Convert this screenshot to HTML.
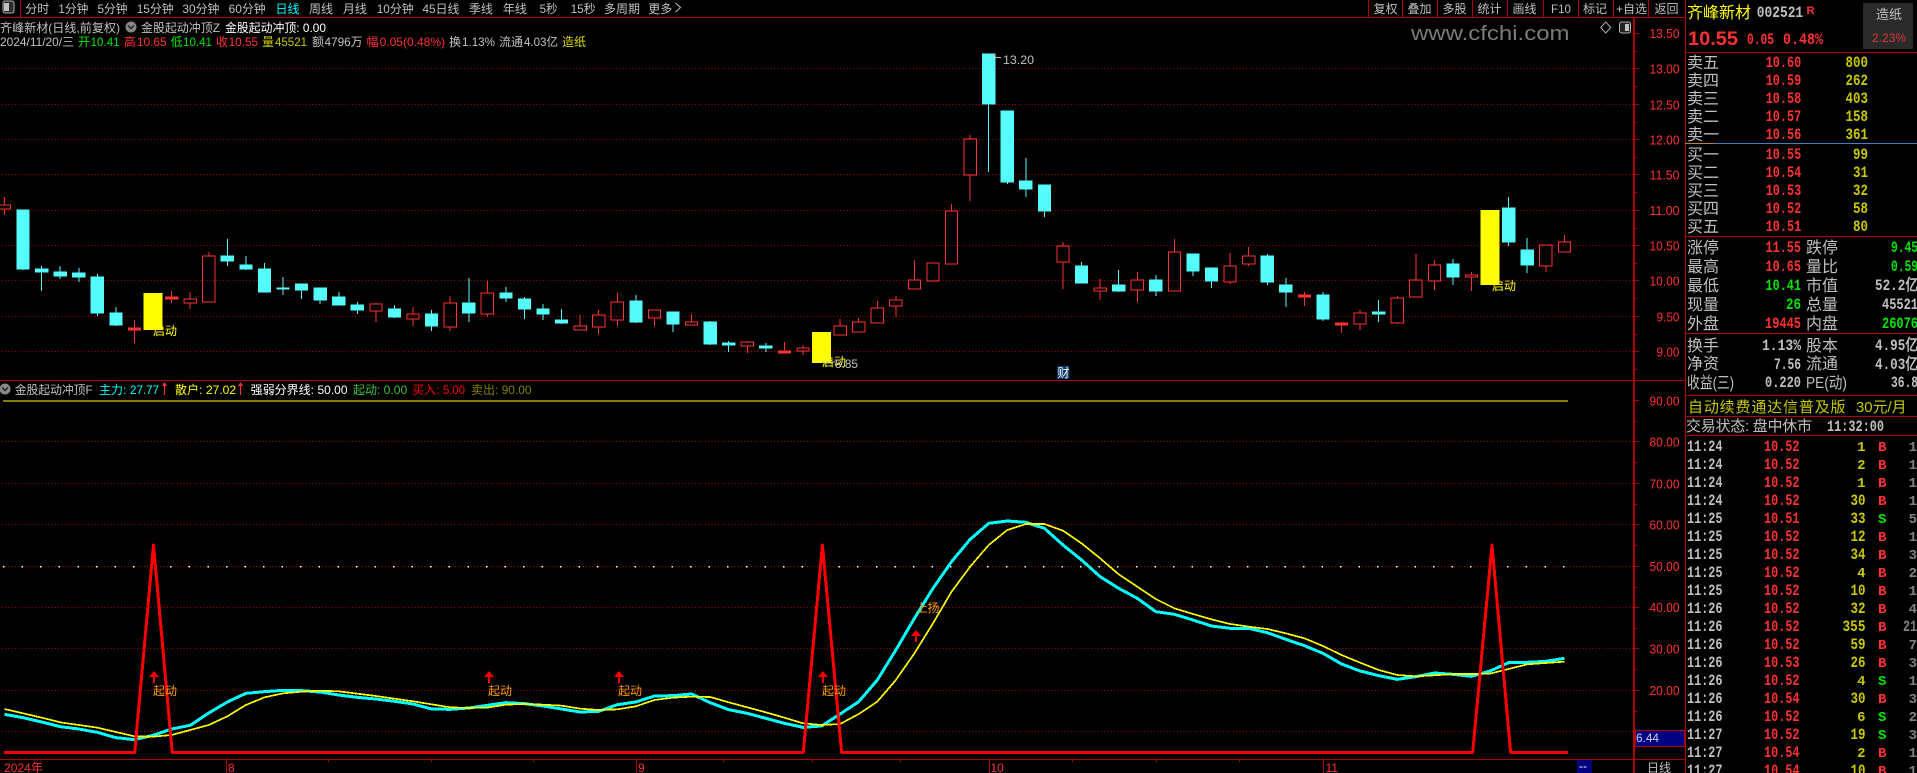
<!DOCTYPE html>
<html lang="zh"><head><meta charset="utf-8"><title>齐峰新材</title>
<style>
html,body{margin:0;padding:0;background:#000;width:1917px;height:773px;overflow:hidden}
svg{display:block}
text{font-family:"Liberation Sans","WenQuanYi Zen Hei","Noto Sans CJK SC",sans-serif;font-size:12px;fill:#c0c0c0;white-space:pre}
path,polyline{vector-effect:non-scaling-stroke}
.m{font-family:"Liberation Mono","WenQuanYi Zen Hei",monospace;font-weight:bold;font-size:15.5px}
text.m:not([textLength]){font-size:14px}
.l{font-size:16px}
.a{font-size:13px;fill:#ff3232}
.r{fill:#ff3232}.g{fill:#00e600}.y{fill:#c8c800}.Y{fill:#ffff00}.c{fill:#00ffff}.w{fill:#fff}.o{fill:#ff9c00}.d{fill:#808080}
</style></head><body>
<svg width="1917" height="773" viewBox="0 0 1917 773" xmlns="http://www.w3.org/2000/svg">
<rect width="1917" height="773" fill="#000"/>
<!-- grid -->
<g stroke="#b00000" stroke-width="1" stroke-dasharray="1 2.3" shape-rendering="crispEdges">
<path d="M2 68.5H1634M2 104.5H1634M2 139.5H1634M2 174.5H1634M2 210.5H1634M2 245.5H1634M2 280.5H1634M2 316.5H1634M2 351.5H1634M2 441.5H1634M2 483.5H1634M2 524.5H1634M2 566.5H1634M2 607.5H1634M2 648.5H1634M2 690.5H1634M2 731.5H1634"/>
</g>
<path d="M3 566.5H1566" stroke="#fff" stroke-width="1.5" stroke-dasharray="1.5 17.07" shape-rendering="crispEdges"/>
<!-- frame lines -->
<g stroke="#b00000" fill="none" shape-rendering="crispEdges">
<path d="M0 17.5H1685M0 380.5H1685M0 759.5H1685M20.5 0V17M1368.5 0V17M1402.5 0V17M1437.5 0V17M1472.5 0V17M1507.5 0V17M1543.5 0V17M1578.5 0V17M1613.5 0V17M1648.5 0V17M1685.5 0V773" stroke-width="1"/>
<path d="M1634 17V773" stroke-width="1.6"/>
<path d="M1634 33.5h5M1634 51.5h3M1634 68.5h5M1634 86.5h3M1634 104.5h5M1634 122.5h3M1634 139.5h5M1634 157.5h3M1634 174.5h5M1634 192.5h3M1634 210.5h5M1634 228.5h3M1634 245.5h5M1634 263.5h3M1634 280.5h5M1634 298.5h3M1634 316.5h5M1634 334.5h3M1634 351.5h5M1634 369.5h3M1634 400.5h5M1634 421.5h3M1634 441.5h5M1634 462.5h3M1634 483.5h5M1634 504.5h3M1634 524.5h5M1634 545.5h3M1634 566.5h5M1634 587.5h3M1634 607.5h5M1634 628.5h3M1634 648.5h5M1634 669.5h3M1634 690.5h5M1634 711.5h3"/>
<path d="M226.5 759V773M636.5 759V773M989.5 759V773M1323.5 759V773M328.5 759v3M431.5 759v3M533.5 759v3M723.5 759v3M812.5 759v3M900.5 759v3M1072.5 759v3M1156.5 759v3M1239.5 759v3"/>
<path d="M1685 52.5H1917M1685 236.5H1917M1685 333.5H1917M1685 395.5H1917M1685 416.5H1917M1685 435.5H1917"/>
<path d="M1685 143.5H1715" stroke="#c08040"/><path d="M1715 143.5H1917" stroke="#4080c0"/>
</g>
<!-- olive line -->
<rect x="3" y="400" width="1565" height="2" fill="#808000"/>
<!-- candles -->
<g transform="translate(4.5,0) scale(18.57,1)" shape-rendering="crispEdges" stroke-width="1">
<path fill="#54fcfc" stroke="#54fcfc" d="M1 210V270M.67 210h.66V269h-.66zM2 266V291M1.67 269h.66V272h-.66zM3 266V279M2.67 272h.66V276h-.66zM4 268V282M3.67 273h.66V277h-.66zM5 274V316M4.67 277h.66V313h-.66zM6 307V326M5.67 313h.66V325h-.66zM12 239V266M11.67 256h.66V261h-.66zM13 256V270M12.67 265h.66V269h-.66zM14 263V292M13.67 269h.66V292h-.66zM15 277V295M14.67 288h.66V289h-.66zM16 284V299M15.67 284h.66V290h-.66zM17 288V304M16.67 288h.66V300h-.66zM18 292V305M17.67 297h.66V305h-.66zM19 302V314M18.67 305h.66V310h-.66zM21 305V318M20.67 309h.66V317h-.66zM23 310V331M22.67 314h.66V326h-.66zM25 278V322M24.67 303h.66V313h-.66zM27 287V302M26.67 293h.66V298h-.66zM28 297V319M27.67 299h.66V309h-.66zM29 304V320M28.67 309h.66V314h-.66zM30 309V324M29.67 320h.66V323h-.66zM34 295V323M33.67 301h.66V322h-.66zM36 312V332M35.67 312h.66V324h-.66zM38 321V345M37.67 322h.66V344h-.66zM39 341V352M38.67 343h.66V345h-.66zM41 343V352M40.67 346h.66V348h-.66zM53 54V172M52.67 54h.66V104h-.66zM54 111V184M53.67 111h.66V182h-.66zM55 158V197M54.67 181h.66V189h-.66zM56 185V217M55.67 185h.66V211h-.66zM58 262V283M57.67 266h.66V283h-.66zM60 270V292M59.67 285h.66V291h-.66zM62 275V296M61.67 280h.66V291h-.66zM64 254V276M63.67 254h.66V271h-.66zM65 268V288M64.67 268h.66V281h-.66zM68 254V285M67.67 256h.66V282h-.66zM69 278V307M68.67 285h.66V292h-.66zM71 292V321M70.67 295h.66V319h-.66zM74 300V322M73.67 312h.66V314h-.66zM78 259V285M77.67 264h.66V277h-.66zM81 197V246M80.67 208h.66V242h-.66zM82 238V273M81.67 250h.66V265h-.66z"/>
<path fill="none" stroke="#ff3232" d="M0 197V205M0 209V215M-.33 205h.66V209h-.66zM10 292V299M10 303V309M9.67 299h.66V303h-.66zM11 252V256M10.67 256h.66V302h-.66zM20 303V304M20 311V322M19.67 304h.66V311h-.66zM22 307V314M22 319V326M21.67 314h.66V319h-.66zM24 296V303M24 327V331M23.67 303h.66V327h-.66zM26 281V293M26 314V317M25.67 293h.66V314h-.66zM31 315V326M30.67 326h.66V330h-.66zM32 310V315M32 327V334M31.67 315h.66V327h-.66zM33 293V302M33 320V326M32.67 302h.66V320h-.66zM35 318V326M34.67 310h.66V318h-.66zM37 314V322M36.67 322h.66V325h-.66zM40 341V342M40 346V353M39.67 342h.66V346h-.66zM43 345V348M43 351V355M42.67 348h.66V351h-.66zM45 319V326M44.67 326h.66V335h-.66zM46 318V322M45.67 322h.66V332h-.66zM47 301V308M46.67 308h.66V323h-.66zM48 296V300M48 306V317M47.67 300h.66V306h-.66zM49 260V280M48.67 280h.66V289h-.66zM49.67 263h.66V281h-.66zM51 204V211M50.67 211h.66V264h-.66zM52 135V139M52 175V201M51.67 139h.66V175h-.66zM57 242V246M57 262V289M56.67 246h.66V262h-.66zM59 279V288M59 291V300M58.67 288h.66V291h-.66zM61 272V280M61 290V302M60.67 280h.66V290h-.66zM63 239V252M62.67 252h.66V291h-.66zM66 253V266M66 282V284M65.67 266h.66V282h-.66zM67 247V256M67 264V266M66.67 256h.66V264h-.66zM73 310V313M73 324V330M72.67 313h.66V324h-.66zM75 296V298M75 323V324M74.67 298h.66V323h-.66zM76 254V280M75.67 280h.66V297h-.66zM77 260V265M77 281V290M76.67 265h.66V281h-.66zM79 272V275M79 277V291M78.67 275h.66V277h-.66zM83 266V272M82.67 245h.66V266h-.66zM84 235V242M83.67 242h.66V252h-.66z"/>
<path fill="#ff3232" stroke="#ff3232" d="M7 320V343M6.67 328h.66V330h-.66zM9 291V303M8.67 297h.66V299h-.66zM42 342V353M41.67 351h.66V353h-.66zM70 292V306M69.67 295h.66V297h-.66zM72 322V333M71.67 323h.66V325h-.66z"/>
<path fill="#ffff00" d="M7.49 293h1.02V330H7.49zM43.49 332h1.02V363H43.49zM79.49 210h1.02V285H79.49z"/>
</g>
<!-- indicator lines -->
<g fill="none" stroke-linejoin="round" transform="translate(4.5,510) scale(18.57,.33333)" shape-rendering="crispEdges">
<polyline stroke="#00ffff" stroke-width="3" points="0,613 1,623 2,636 3,650 4,657 5,667 6,683 7,689 8,676 9,657 10,646 11,609 12,576 13,550 14,545 15,541 16,542 17,546 18,555 19,562 20,567 21,574 22,582 23,597 24,598 25,594 26,586 27,578 28,581 29,588 30,597 31,606 32,604 33,584 34,576 35,558 36,557 37,552 38,578 39,599 40,610 41,625 42,640 43,652 44,648 45,612 46,575 47,510 48,420 49,325 50,235 51,155 52,88 53,40 54,33 55,37 56,55 57,105 58,150 59,200 60,235 61,265 62,305 63,313 64,330 65,348 66,355 67,355 68,368 69,388 70,407 71,430 72,462 73,483 74,497 75,508 76,500 77,489 78,493 79,499 80,483 81,458 82,457 83,454 84,445"/>
<polyline stroke="#ffff00" stroke-width="1.7" points="0,597 1,610 2,623 3,637 4,645 5,653 6,666 7,679 8,680 9,675 10,660 11,645 12,619 13,585 14,562 15,550 16,545 17,542 18,544 19,551 20,558 21,566 22,574 23,583 24,592 25,594 26,593 27,584 28,582 29,584 30,587 31,596 32,600 33,598 34,589 35,570 36,563 37,560 38,561 39,577 40,592 41,607 42,623 43,640 44,645 45,642 46,612 47,575 48,510 49,430 50,340 51,245 52,170 53,105 54,60 55,42 56,42 57,62 58,100 59,145 60,193 61,230 62,267 63,295 64,312 65,328 66,342 67,350 68,357 69,370 70,385 71,408 72,435 73,458 74,480 75,495 76,499 77,496 78,492 79,492 80,491 81,477 82,463 83,459 84,455"/>
</g>
<polyline fill="none" stroke="#ff0000" stroke-width="3" stroke-linejoin="round" shape-rendering="crispEdges" points="4,752.3 134.7,752.3 153.5,545 172.2,752.3 803.3,752.3 822.4,545 841.6,752.3 1472.7,752.3 1492,545 1510.6,752.3 1568,752.3"/>
<!-- red arrows -->
<path fill="#f00" d="M154 671l5 6h-4v6h-2v-6h-4zM489 671l5 6h-4v6h-2v-6h-4zM619 671l5 6h-4v6h-2v-6h-4zM823 671l5 6h-4v6h-2v-6h-4zM916 630l5 6h-4v6h-2v-6h-4z"/>
<text class="o" x="153" y="695">起动</text><text class="o" x="488" y="695">起动</text><text class="o" x="618" y="695">起动</text><text class="o" x="822" y="695">起动</text><text class="o" x="915.5" y="612">上扬</text>
<!-- chart labels -->
<text class="Y" x="153" y="335">启动</text><text class="Y" x="822" y="366">启动</text><text class="Y" x="1492" y="290">启动</text>
<text x="1003" y="64" textLength="31" lengthAdjust="spacingAndGlyphs">13.20</text><path d="M991 56h4l-2-2M995 57.5h6" stroke="#c0c0c0" fill="none"/>
<text x="835" y="368" textLength="23" lengthAdjust="spacingAndGlyphs">8.85</text><path d="M822 362h13" stroke="#c0c0c0" fill="none"/>
<rect x="1057" y="366" width="12.5" height="13" fill="#0a3a6a"/><text class="w" x="1057.5" y="377">财</text>
<!-- toolbar -->
<rect x="3" y="1" width="11" height="12" rx="2" fill="#2a2a2a" stroke="#b0b0b0"/><rect x="4" y="3" width="5" height="8" fill="#c0c0c0"/>
<g>
<text x="25.3" y="13">分时</text><text x="58.4" y="13" textLength="30" lengthAdjust="spacingAndGlyphs">1分钟</text><text x="97.5" y="13" textLength="30" lengthAdjust="spacingAndGlyphs">5分钟</text><text x="136.7" y="13" textLength="37" lengthAdjust="spacingAndGlyphs">15分钟</text><text x="182.4" y="13" textLength="37" lengthAdjust="spacingAndGlyphs">30分钟</text><text x="228.6" y="13" textLength="37" lengthAdjust="spacingAndGlyphs">60分钟</text><text class="c" x="275.5" y="13">日线</text><text x="309" y="13">周线</text><text x="342.9" y="13">月线</text><text x="376.7" y="13" textLength="37" lengthAdjust="spacingAndGlyphs">10分钟</text><text x="422.4" y="13" textLength="37" lengthAdjust="spacingAndGlyphs">45日线</text><text x="468.9" y="13">季线</text><text x="502.9" y="13">年线</text><text x="539.6" y="13" textLength="18" lengthAdjust="spacingAndGlyphs">5秒</text><text x="570.6" y="13" textLength="25" lengthAdjust="spacingAndGlyphs">15秒</text><text x="604" y="13" textLength="36" lengthAdjust="spacingAndGlyphs">多周期</text><text x="648.2" y="13">更多</text><path d="M675.5 3l5 4.5-5 4.5" stroke="#c0c0c0" fill="none"/>
<text x="1373.5" y="13">复权</text><text x="1407.5" y="13">叠加</text><text x="1442.5" y="13">多股</text><text x="1477.5" y="13">统计</text><text x="1512.5" y="13">画线</text><text x="1551" y="13" textLength="20" lengthAdjust="spacingAndGlyphs">F10</text><text x="1583" y="13">标记</text><text x="1616" y="13" textLength="31" lengthAdjust="spacingAndGlyphs">+自选</text><text x="1654.5" y="13">返回</text>
</g>
<!-- header 1 -->
<text x="0" y="32" textLength="120" lengthAdjust="spacingAndGlyphs">齐峰新材(日线,前复权)</text>
<circle cx="131" cy="27" r="5.5" fill="#888"/><path d="M128 25.5l3 3 3-3" stroke="#222" fill="none" stroke-width="1.5"/>
<text x="141" y="32" textLength="79" lengthAdjust="spacingAndGlyphs">金股起动冲顶Z</text>
<text class="w" x="225" y="32" textLength="101" lengthAdjust="spacingAndGlyphs">金股起动冲顶: 0.00</text>
<!-- header 2 -->
<g>
<text x="0" y="46" textLength="74" lengthAdjust="spacingAndGlyphs">2024/11/20/三</text>
<text class="g" x="78" y="46">开</text><text class="g" x="90.6" y="46" textLength="29" lengthAdjust="spacingAndGlyphs">10.41</text>
<text class="r" x="123.7" y="46">高</text><text class="r" x="137" y="46" textLength="29.5" lengthAdjust="spacingAndGlyphs">10.65</text>
<text class="g" x="170.6" y="46">低</text><text class="g" x="183" y="46" textLength="29" lengthAdjust="spacingAndGlyphs">10.41</text>
<text class="r" x="216" y="46">收</text><text class="r" x="228.6" y="46" textLength="29.5" lengthAdjust="spacingAndGlyphs">10.55</text>
<text class="y" x="262" y="46">量</text><text class="y" x="275" y="46" textLength="32" lengthAdjust="spacingAndGlyphs">45521</text>
<text x="312" y="46">额</text><text x="324.5" y="46" textLength="38" lengthAdjust="spacingAndGlyphs">4796万</text>
<text class="r" x="366.5" y="46">幅</text><text class="r" x="379.6" y="46" textLength="65.5" lengthAdjust="spacingAndGlyphs">0.05(0.48%)</text>
<text x="449" y="46">换</text><text x="462" y="46" textLength="33" lengthAdjust="spacingAndGlyphs">1.13%</text>
<text x="499" y="46">流通</text><text x="524" y="46" textLength="34" lengthAdjust="spacingAndGlyphs">4.03亿</text>
<text class="Y" x="562" y="46" style="fill:#dcdc00">造纸</text>
</g>
<!-- indicator title -->
<circle cx="5" cy="389" r="5.5" fill="#888"/><path d="M2 387.5l3 3 3-3" stroke="#222" fill="none" stroke-width="1.5"/>
<text x="14.7" y="394" textLength="78" lengthAdjust="spacingAndGlyphs">金股起动冲顶F</text>
<text class="c" x="99" y="394">主力:</text><text class="c" x="130" y="394" textLength="29" lengthAdjust="spacingAndGlyphs">27.77</text>
<path d="M164.5 382l2.5 4h-2v9h-1v-9h-2zM240.5 382l2.5 4h-2v9h-1v-9h-2z" fill="#ff3232"/>
<text class="Y" x="175" y="394">散户:</text><text class="Y" x="206" y="394" textLength="30" lengthAdjust="spacingAndGlyphs">27.02</text>
<text class="w" x="250.6" y="394">强弱分界线:</text><text class="w" x="317.5" y="394" textLength="30" lengthAdjust="spacingAndGlyphs">50.00</text>
<text x="353" y="394" style="fill:#40c040">起动:</text><text x="383.7" y="394" textLength="23.5" lengthAdjust="spacingAndGlyphs" style="fill:#40c040">0.00</text>
<text x="412" y="394" style="fill:#f00">买入:</text><text x="443" y="394" textLength="22" lengthAdjust="spacingAndGlyphs" style="fill:#f00">5.00</text>
<text x="471" y="394" style="fill:#808000">卖出:</text><text x="501.6" y="394" textLength="30" lengthAdjust="spacingAndGlyphs" style="fill:#808000">90.00</text>
<!-- watermark -->
<text x="1411" y="40" textLength="158.5" lengthAdjust="spacingAndGlyphs" style="font-size:20px;fill:#7a7a7a">www.cfchi.com</text>
<path d="M1605.7 22l5 5.5-5 5.5-5-5.5z" stroke="#aaa" fill="none"/>
<rect x="1619.5" y="22" width="11" height="11" rx="2" fill="#222" stroke="#b0b0b0"/><rect x="1625" y="24" width="4" height="7" fill="#c0c0c0"/>
<!-- price axis labels -->
<g text-anchor="end">
<text class="a" x="1679.5" y="38" textLength="30" lengthAdjust="spacingAndGlyphs">13.50</text><text class="a" x="1679.5" y="73.5" textLength="30" lengthAdjust="spacingAndGlyphs">13.00</text><text class="a" x="1679.5" y="109.5" textLength="30" lengthAdjust="spacingAndGlyphs">12.50</text><text class="a" x="1679.5" y="144.5" textLength="30" lengthAdjust="spacingAndGlyphs">12.00</text><text class="a" x="1679.5" y="179.5" textLength="30" lengthAdjust="spacingAndGlyphs">11.50</text><text class="a" x="1679.5" y="215" textLength="30" lengthAdjust="spacingAndGlyphs">11.00</text><text class="a" x="1679.5" y="250.5" textLength="30" lengthAdjust="spacingAndGlyphs">10.50</text><text class="a" x="1679.5" y="285.5" textLength="30" lengthAdjust="spacingAndGlyphs">10.00</text><text class="a" x="1679.5" y="321.5" textLength="23" lengthAdjust="spacingAndGlyphs">9.50</text><text class="a" x="1679.5" y="356.5" textLength="23" lengthAdjust="spacingAndGlyphs">9.00</text>
<text class="a" x="1679.5" y="405.5" textLength="30" lengthAdjust="spacingAndGlyphs">90.00</text><text class="a" x="1679.5" y="446.5" textLength="30" lengthAdjust="spacingAndGlyphs">80.00</text><text class="a" x="1679.5" y="488.5" textLength="30" lengthAdjust="spacingAndGlyphs">70.00</text><text class="a" x="1679.5" y="529.5" textLength="30" lengthAdjust="spacingAndGlyphs">60.00</text><text class="a" x="1679.5" y="571" textLength="30" lengthAdjust="spacingAndGlyphs">50.00</text><text class="a" x="1679.5" y="612" textLength="30" lengthAdjust="spacingAndGlyphs">40.00</text><text class="a" x="1679.5" y="653.5" textLength="30" lengthAdjust="spacingAndGlyphs">30.00</text><text class="a" x="1679.5" y="695" textLength="30" lengthAdjust="spacingAndGlyphs">20.00</text>
</g>
<rect x="1635.5" y="730.5" width="49" height="16" fill="#000080" stroke="#b00000"/>
<text x="1636" y="742" textLength="23" lengthAdjust="spacingAndGlyphs" style="fill:#d0d0ff">6.44</text>
<!-- bottom axis -->
<text class="r" x="4" y="772" textLength="39" lengthAdjust="spacingAndGlyphs">2024年</text><text class="r" x="228" y="772">8</text><text class="r" x="638" y="772">9</text><text class="r" x="990.5" y="772">10</text><text class="r" x="1325.5" y="772">11</text>
<rect x="1577" y="760" width="15" height="13" fill="#000080"/><text class="w" x="1579" y="770">--</text>
<text x="1647" y="772">日线</text>
<!-- right panel top -->
<text class="l" x="1687" y="18" style="fill:#ffff00">齐峰新材</text>
<text class="m" x="1756.7" y="17" textLength="46.5" lengthAdjust="spacingAndGlyphs">002521</text>
<text class="r" x="1806.5" y="14" style="font-weight:bold;font-size:11px">R</text>
<rect x="1863" y="3" width="50" height="46" fill="#2a2a2a"/>
<text x="1876" y="19" style="font-size:13px">造纸</text>
<text class="r" x="1872" y="42" textLength="34" lengthAdjust="spacingAndGlyphs" style="fill:#e03838">2.23%</text>
<text class="r" x="1688" y="45" textLength="50" lengthAdjust="spacingAndGlyphs" style="font-weight:bold;font-size:19px">10.55</text>
<text class="m r" x="1747" y="44" textLength="27" lengthAdjust="spacingAndGlyphs">0.05</text>
<text class="m r" x="1783" y="44" textLength="40" lengthAdjust="spacingAndGlyphs">0.48%</text>
<!-- order book -->
<g>
<text class="l" x="1687" y="68">卖五</text><text class="l" x="1687" y="86">卖四</text><text class="l" x="1687" y="104">卖三</text><text class="l" x="1687" y="122">卖二</text><text class="l" x="1687" y="140">卖一</text>
<text class="l" x="1687" y="160">买一</text><text class="l" x="1687" y="178">买二</text><text class="l" x="1687" y="196">买三</text><text class="l" x="1687" y="214">买四</text><text class="l" x="1687" y="232">买五</text>
<text class="m r" x="1765.7" y="67" textLength="35.5" lengthAdjust="spacingAndGlyphs">10.60</text><text class="m r" x="1765.7" y="85" textLength="35.5" lengthAdjust="spacingAndGlyphs">10.59</text><text class="m r" x="1765.7" y="103" textLength="35.5" lengthAdjust="spacingAndGlyphs">10.58</text><text class="m r" x="1765.7" y="121" textLength="35.5" lengthAdjust="spacingAndGlyphs">10.57</text><text class="m r" x="1765.7" y="139" textLength="35.5" lengthAdjust="spacingAndGlyphs">10.56</text>
<text class="m r" x="1765.7" y="159" textLength="35.5" lengthAdjust="spacingAndGlyphs">10.55</text><text class="m r" x="1765.7" y="177" textLength="35.5" lengthAdjust="spacingAndGlyphs">10.54</text><text class="m r" x="1765.7" y="195" textLength="35.5" lengthAdjust="spacingAndGlyphs">10.53</text><text class="m r" x="1765.7" y="213" textLength="35.5" lengthAdjust="spacingAndGlyphs">10.52</text><text class="m r" x="1765.7" y="231" textLength="35.5" lengthAdjust="spacingAndGlyphs">10.51</text>
<g text-anchor="end">
<text class="m y" x="1868" y="67" textLength="22.5" lengthAdjust="spacingAndGlyphs">800</text><text class="m y" x="1868" y="85" textLength="22.5" lengthAdjust="spacingAndGlyphs">262</text><text class="m y" x="1868" y="103" textLength="22.5" lengthAdjust="spacingAndGlyphs">403</text><text class="m y" x="1868" y="121" textLength="22.5" lengthAdjust="spacingAndGlyphs">158</text><text class="m y" x="1868" y="139" textLength="22.5" lengthAdjust="spacingAndGlyphs">361</text>
<text class="m y" x="1868" y="159" textLength="15" lengthAdjust="spacingAndGlyphs">99</text><text class="m y" x="1868" y="177" textLength="15" lengthAdjust="spacingAndGlyphs">31</text><text class="m y" x="1868" y="195" textLength="15" lengthAdjust="spacingAndGlyphs">32</text><text class="m y" x="1868" y="213" textLength="15" lengthAdjust="spacingAndGlyphs">58</text><text class="m y" x="1868" y="231" textLength="15" lengthAdjust="spacingAndGlyphs">80</text>
</g>
</g>
<!-- stats -->
<g>
<text class="l" x="1687" y="253">涨停</text><text class="l" x="1806" y="253">跌停</text>
<text class="l" x="1687" y="272">最高</text><text class="l" x="1806" y="272">量比</text>
<text class="l" x="1687" y="291">最低</text><text class="l" x="1806" y="291">市值</text>
<text class="l" x="1687" y="310">现量</text><text class="l" x="1806" y="310">总量</text>
<text class="l" x="1687" y="329">外盘</text><text class="l" x="1806" y="329">内盘</text>
<text class="l" x="1687" y="351">换手</text><text class="l" x="1806" y="351">股本</text>
<text class="l" x="1687" y="369">净资</text><text class="l" x="1806" y="369">流通</text>
<text class="l" x="1687" y="388" textLength="47" lengthAdjust="spacingAndGlyphs">收益(三)</text><text class="l" x="1806" y="388" textLength="41" lengthAdjust="spacingAndGlyphs">PE(动)</text>
<g text-anchor="end">
<text class="m r" x="1801" y="252" textLength="35.5" lengthAdjust="spacingAndGlyphs">11.55</text><text class="m g" x="1918" y="252" textLength="27" lengthAdjust="spacingAndGlyphs">9.45</text>
<text class="m r" x="1801" y="271" textLength="35.5" lengthAdjust="spacingAndGlyphs">10.65</text><text class="m g" x="1918" y="271" textLength="27" lengthAdjust="spacingAndGlyphs">0.59</text>
<text class="m g" x="1801" y="290" textLength="35.5" lengthAdjust="spacingAndGlyphs">10.41</text><text class="m" x="1918" y="290" textLength="43" lengthAdjust="spacingAndGlyphs">52.2亿</text>
<text class="m g" x="1801" y="309" textLength="15" lengthAdjust="spacingAndGlyphs">26</text><text class="m" x="1918" y="309" textLength="36" lengthAdjust="spacingAndGlyphs">45521</text>
<text class="m r" x="1801" y="328" textLength="36" lengthAdjust="spacingAndGlyphs">19445</text><text class="m g" x="1918" y="328" textLength="36" lengthAdjust="spacingAndGlyphs">26076</text>
<text class="m" x="1801" y="350" textLength="39" lengthAdjust="spacingAndGlyphs">1.13%</text><text class="m" x="1918" y="350" textLength="43" lengthAdjust="spacingAndGlyphs">4.95亿</text>
<text class="m" x="1801" y="369" textLength="27" lengthAdjust="spacingAndGlyphs">7.56</text><text class="m" x="1918" y="369" textLength="43" lengthAdjust="spacingAndGlyphs">4.03亿</text>
<text class="m" x="1801" y="387" textLength="36" lengthAdjust="spacingAndGlyphs">0.220</text><text class="m" x="1918" y="387" textLength="27" lengthAdjust="spacingAndGlyphs">36.8</text>
</g>
</g>
<text class="y" x="1688" y="412" textLength="157.5" lengthAdjust="spacing" style="font-size:15px">自动续费通达信普及版</text>
<text class="y" x="1856" y="412" textLength="50.5" lengthAdjust="spacingAndGlyphs" style="font-size:15px">30元/月</text>
<text class="l" x="1686" y="431" textLength="126" lengthAdjust="spacing" style="font-size:15px">交易状态: 盘中休市</text>
<text class="m" x="1827" y="431" textLength="57" lengthAdjust="spacingAndGlyphs">11:32:00</text>
<!-- trades -->
<g id="t">
<text class="m" x="1687" y="451" textLength="35.5" lengthAdjust="spacingAndGlyphs">11:24</text><text class="m r" x="1764" y="451" textLength="35.5" lengthAdjust="spacingAndGlyphs">10.52</text><text class="m y" x="1865.5" y="451" text-anchor="end">1</text><text class="m r" x="1878" y="451">B</text><text class="m d" x="1917" y="451" text-anchor="end">1</text>
<text class="m" x="1687" y="469" textLength="35.5" lengthAdjust="spacingAndGlyphs">11:24</text><text class="m r" x="1764" y="469" textLength="35.5" lengthAdjust="spacingAndGlyphs">10.52</text><text class="m y" x="1865.5" y="469" text-anchor="end">2</text><text class="m r" x="1878" y="469">B</text><text class="m d" x="1917" y="469" text-anchor="end">1</text>
<text class="m" x="1687" y="487" textLength="35.5" lengthAdjust="spacingAndGlyphs">11:24</text><text class="m r" x="1764" y="487" textLength="35.5" lengthAdjust="spacingAndGlyphs">10.52</text><text class="m y" x="1865.5" y="487" text-anchor="end">1</text><text class="m r" x="1878" y="487">B</text><text class="m d" x="1917" y="487" text-anchor="end">1</text>
<text class="m" x="1687" y="505" textLength="35.5" lengthAdjust="spacingAndGlyphs">11:24</text><text class="m r" x="1764" y="505" textLength="35.5" lengthAdjust="spacingAndGlyphs">10.52</text><text class="m y" x="1865.5" y="505" text-anchor="end" textLength="15" lengthAdjust="spacingAndGlyphs">30</text><text class="m r" x="1878" y="505">B</text><text class="m d" x="1917" y="505" text-anchor="end">1</text>
<text class="m" x="1687" y="523" textLength="35.5" lengthAdjust="spacingAndGlyphs">11:25</text><text class="m r" x="1764" y="523" textLength="35.5" lengthAdjust="spacingAndGlyphs">10.51</text><text class="m y" x="1865.5" y="523" text-anchor="end" textLength="15" lengthAdjust="spacingAndGlyphs">33</text><text class="m g" x="1878" y="523">S</text><text class="m d" x="1917" y="523" text-anchor="end">5</text>
<text class="m" x="1687" y="541" textLength="35.5" lengthAdjust="spacingAndGlyphs">11:25</text><text class="m r" x="1764" y="541" textLength="35.5" lengthAdjust="spacingAndGlyphs">10.52</text><text class="m y" x="1865.5" y="541" text-anchor="end" textLength="15" lengthAdjust="spacingAndGlyphs">12</text><text class="m r" x="1878" y="541">B</text><text class="m d" x="1917" y="541" text-anchor="end">1</text>
<text class="m" x="1687" y="559" textLength="35.5" lengthAdjust="spacingAndGlyphs">11:25</text><text class="m r" x="1764" y="559" textLength="35.5" lengthAdjust="spacingAndGlyphs">10.52</text><text class="m y" x="1865.5" y="559" text-anchor="end" textLength="15" lengthAdjust="spacingAndGlyphs">34</text><text class="m r" x="1878" y="559">B</text><text class="m d" x="1917" y="559" text-anchor="end">3</text>
<text class="m" x="1687" y="577" textLength="35.5" lengthAdjust="spacingAndGlyphs">11:25</text><text class="m r" x="1764" y="577" textLength="35.5" lengthAdjust="spacingAndGlyphs">10.52</text><text class="m y" x="1865.5" y="577" text-anchor="end">4</text><text class="m r" x="1878" y="577">B</text><text class="m d" x="1917" y="577" text-anchor="end">2</text>
<text class="m" x="1687" y="595" textLength="35.5" lengthAdjust="spacingAndGlyphs">11:25</text><text class="m r" x="1764" y="595" textLength="35.5" lengthAdjust="spacingAndGlyphs">10.52</text><text class="m y" x="1865.5" y="595" text-anchor="end" textLength="15" lengthAdjust="spacingAndGlyphs">10</text><text class="m r" x="1878" y="595">B</text><text class="m d" x="1917" y="595" text-anchor="end">1</text>
<text class="m" x="1687" y="613" textLength="35.5" lengthAdjust="spacingAndGlyphs">11:26</text><text class="m r" x="1764" y="613" textLength="35.5" lengthAdjust="spacingAndGlyphs">10.52</text><text class="m y" x="1865.5" y="613" text-anchor="end" textLength="15" lengthAdjust="spacingAndGlyphs">32</text><text class="m r" x="1878" y="613">B</text><text class="m d" x="1917" y="613" text-anchor="end">4</text>
<text class="m" x="1687" y="631" textLength="35.5" lengthAdjust="spacingAndGlyphs">11:26</text><text class="m r" x="1764" y="631" textLength="35.5" lengthAdjust="spacingAndGlyphs">10.52</text><text class="m y" x="1865.5" y="631" text-anchor="end" textLength="23" lengthAdjust="spacingAndGlyphs">355</text><text class="m r" x="1878" y="631">B</text><text class="m d" x="1917" y="631" text-anchor="end" textLength="14" lengthAdjust="spacingAndGlyphs">21</text>
<text class="m" x="1687" y="649" textLength="35.5" lengthAdjust="spacingAndGlyphs">11:26</text><text class="m r" x="1764" y="649" textLength="35.5" lengthAdjust="spacingAndGlyphs">10.52</text><text class="m y" x="1865.5" y="649" text-anchor="end" textLength="15" lengthAdjust="spacingAndGlyphs">59</text><text class="m r" x="1878" y="649">B</text><text class="m d" x="1917" y="649" text-anchor="end">7</text>
<text class="m" x="1687" y="667" textLength="35.5" lengthAdjust="spacingAndGlyphs">11:26</text><text class="m r" x="1764" y="667" textLength="35.5" lengthAdjust="spacingAndGlyphs">10.53</text><text class="m y" x="1865.5" y="667" text-anchor="end" textLength="15" lengthAdjust="spacingAndGlyphs">26</text><text class="m r" x="1878" y="667">B</text><text class="m d" x="1917" y="667" text-anchor="end">3</text>
<text class="m" x="1687" y="685" textLength="35.5" lengthAdjust="spacingAndGlyphs">11:26</text><text class="m r" x="1764" y="685" textLength="35.5" lengthAdjust="spacingAndGlyphs">10.52</text><text class="m y" x="1865.5" y="685" text-anchor="end">4</text><text class="m g" x="1878" y="685">S</text><text class="m d" x="1917" y="685" text-anchor="end">1</text>
<text class="m" x="1687" y="703" textLength="35.5" lengthAdjust="spacingAndGlyphs">11:26</text><text class="m r" x="1764" y="703" textLength="35.5" lengthAdjust="spacingAndGlyphs">10.54</text><text class="m y" x="1865.5" y="703" text-anchor="end" textLength="15" lengthAdjust="spacingAndGlyphs">30</text><text class="m r" x="1878" y="703">B</text><text class="m d" x="1917" y="703" text-anchor="end">3</text>
<text class="m" x="1687" y="721" textLength="35.5" lengthAdjust="spacingAndGlyphs">11:26</text><text class="m r" x="1764" y="721" textLength="35.5" lengthAdjust="spacingAndGlyphs">10.52</text><text class="m y" x="1865.5" y="721" text-anchor="end">6</text><text class="m g" x="1878" y="721">S</text><text class="m d" x="1917" y="721" text-anchor="end">2</text>
<text class="m" x="1687" y="739" textLength="35.5" lengthAdjust="spacingAndGlyphs">11:27</text><text class="m r" x="1764" y="739" textLength="35.5" lengthAdjust="spacingAndGlyphs">10.52</text><text class="m y" x="1865.5" y="739" text-anchor="end" textLength="15" lengthAdjust="spacingAndGlyphs">19</text><text class="m g" x="1878" y="739">S</text><text class="m d" x="1917" y="739" text-anchor="end">3</text>
<text class="m" x="1687" y="757" textLength="35.5" lengthAdjust="spacingAndGlyphs">11:27</text><text class="m r" x="1764" y="757" textLength="35.5" lengthAdjust="spacingAndGlyphs">10.54</text><text class="m y" x="1865.5" y="757" text-anchor="end">2</text><text class="m r" x="1878" y="757">B</text><text class="m d" x="1917" y="757" text-anchor="end">1</text>
<text class="m" x="1687" y="775" textLength="35.5" lengthAdjust="spacingAndGlyphs">11:27</text><text class="m r" x="1764" y="775" textLength="35.5" lengthAdjust="spacingAndGlyphs">10.54</text><text class="m y" x="1865.5" y="775" text-anchor="end" textLength="15" lengthAdjust="spacingAndGlyphs">10</text><text class="m r" x="1878" y="775">B</text><text class="m d" x="1917" y="775" text-anchor="end">1</text>
</g>
</svg>
</body></html>
